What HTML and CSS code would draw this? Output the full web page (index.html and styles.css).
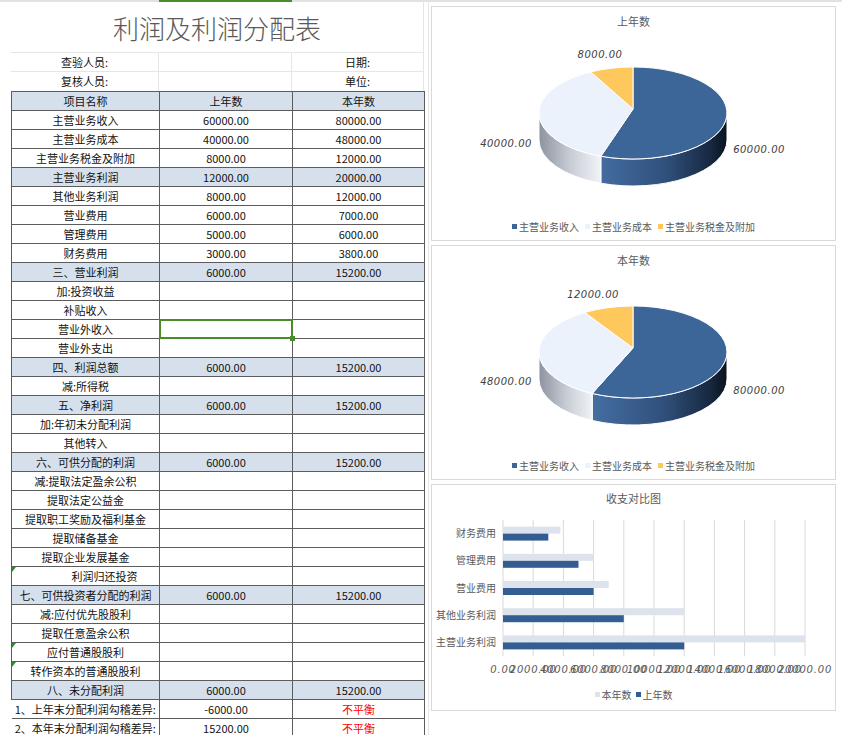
FILE: index.html
```html
<!DOCTYPE html>
<html lang="zh">
<head>
<meta charset="utf-8">
<title>利润及利润分配表</title>
<link rel="stylesheet" href="styles.css">
</head>
<body>
<div class="topbar"><span class="topbar-sel"></span></div>
<div class="page">
  <div class="sheet">
    <div class="title">利润及利润分配表</div>
    <div class="info">
      <div>查验人员:</div><div></div><div>日期:</div>
      <div>复核人员:</div><div></div><div>单位:</div>
    </div>
    <table class="grid">
      <colgroup><col class="c1"><col class="c2"><col class="c3"></colgroup>
      <tbody>
        <tr class="hl"><td>项目名称</td><td>上年数</td><td>本年数</td></tr>
        <tr><td>主营业务收入</td><td>60000.00</td><td>80000.00</td></tr>
        <tr><td>主营业务成本</td><td>40000.00</td><td>48000.00</td></tr>
        <tr><td>主营业务税金及附加</td><td>8000.00</td><td>12000.00</td></tr>
        <tr class="hl"><td>主营业务利润</td><td>12000.00</td><td>20000.00</td></tr>
        <tr><td>其他业务利润</td><td>8000.00</td><td>12000.00</td></tr>
        <tr><td>营业费用</td><td>6000.00</td><td>7000.00</td></tr>
        <tr><td>管理费用</td><td>5000.00</td><td>6000.00</td></tr>
        <tr><td>财务费用</td><td>3000.00</td><td>3800.00</td></tr>
        <tr class="hl"><td>三、营业利润</td><td>6000.00</td><td>15200.00</td></tr>
        <tr><td>加:投资收益</td><td></td><td></td></tr>
        <tr><td>补贴收入</td><td></td><td></td></tr>
        <tr><td>营业外收入</td><td class="sel"></td><td></td></tr>
        <tr><td>营业外支出</td><td></td><td></td></tr>
        <tr class="hl"><td>四、利润总额</td><td>6000.00</td><td>15200.00</td></tr>
        <tr><td>减:所得税</td><td></td><td></td></tr>
        <tr class="hl"><td>五、净利润</td><td>6000.00</td><td>15200.00</td></tr>
        <tr><td>加:年初未分配利润</td><td></td><td></td></tr>
        <tr><td>其他转入</td><td></td><td></td></tr>
        <tr class="hl"><td>六、可供分配的利润</td><td>6000.00</td><td>15200.00</td></tr>
        <tr><td>减:提取法定盈余公积</td><td></td><td></td></tr>
        <tr><td>提取法定公益金</td><td></td><td></td></tr>
        <tr><td>提取职工奖励及福利基金</td><td></td><td></td></tr>
        <tr><td>提取储备基金</td><td></td><td></td></tr>
        <tr><td>提取企业发展基金</td><td></td><td></td></tr>
        <tr><td class="tri indent">利润归还投资</td><td></td><td></td></tr>
        <tr class="hl"><td>七、可供投资者分配的利润</td><td>6000.00</td><td>15200.00</td></tr>
        <tr><td>减:应付优先股股利</td><td></td><td></td></tr>
        <tr><td>提取任意盈余公积</td><td></td><td></td></tr>
        <tr><td class="tri">应付普通股股利</td><td></td><td></td></tr>
        <tr><td class="tri">转作资本的普通股股利</td><td></td><td></td></tr>
        <tr class="hl"><td>八、未分配利润</td><td>6000.00</td><td>15200.00</td></tr>
        <tr class="chk"><td>1、上年末分配利润勾稽差异:</td><td>-6000.00</td><td class="bad">不平衡</td></tr>
        <tr class="chk"><td>2、本年末分配利润勾稽差异:</td><td>15200.00</td><td class="bad">不平衡</td></tr>
      </tbody>
    </table>
  </div>

  <div class="charts">
    <div class="chart pie-chart">
      <div class="chart-title">上年数</div>
      <svg class="pie" width="403" height="180" viewBox="0 0 403 180">
        <defs>
          <linearGradient id="ds1" gradientUnits="userSpaceOnUse" x1="160" y1="0" x2="295" y2="0">
            <stop offset="0" stop-color="#4670a5"/>
            <stop offset="0.55" stop-color="#30507b"/>
            <stop offset="0.88" stop-color="#172840"/>
            <stop offset="1" stop-color="#0a121e"/>
          </linearGradient>
          <linearGradient id="ls1" gradientUnits="userSpaceOnUse" x1="107" y1="0" x2="170" y2="0">
            <stop offset="0" stop-color="#8c939e"/>
            <stop offset="0.5" stop-color="#c8cdd5"/>
            <stop offset="1" stop-color="#f2f5f9"/>
          </linearGradient>
        </defs>
        <path d="M295,79 A94,46 0 0 1 168.85,122.23 L168.85,149.23 A94,46 0 0 0 295,106 Z" fill="url(#ds1)" stroke="#fff" stroke-width="1"/>
        <path d="M168.85,122.23 A94,46 0 0 1 107,79 L107,106 A94,46 0 0 0 168.85,149.23 Z" fill="url(#ls1)" stroke="#fff" stroke-width="1"/>
        <path d="M201,75 L201,33 A94,46 0 1 1 168.85,122.23 Z" fill="#3c6598" stroke="#fff" stroke-width="1"/>
        <path d="M201,75 L168.85,122.23 A94,46 0 0 1 158.81,37.89 Z" fill="#ebf2fb" stroke="#fff" stroke-width="1"/>
        <path d="M201,75 L158.81,37.89 A94,46 0 0 1 201,33 Z" fill="#ffc85c" stroke="#fff" stroke-width="1"/>
        <text class="dl" x="168" y="24" text-anchor="middle">8000.00</text>
        <text class="dl" x="74" y="113" text-anchor="middle">40000.00</text>
        <text class="dl" x="327" y="119" text-anchor="middle">60000.00</text>
      </svg>
      <div class="legend">
        <span class="item"><i class="sw dark"></i>主营业务收入</span>
        <span class="item"><i class="sw light"></i>主营业务成本</span>
        <span class="item"><i class="sw yellow"></i>主营业务税金及附加</span>
      </div>
    </div>

    <div class="chart pie-chart">
      <div class="chart-title">本年数</div>
      <svg class="pie" width="403" height="180" viewBox="0 0 403 180">
        <defs>
          <linearGradient id="ds2" gradientUnits="userSpaceOnUse" x1="155" y1="0" x2="295" y2="0">
            <stop offset="0" stop-color="#4670a5"/>
            <stop offset="0.55" stop-color="#30507b"/>
            <stop offset="0.88" stop-color="#172840"/>
            <stop offset="1" stop-color="#0a121e"/>
          </linearGradient>
          <linearGradient id="ls2" gradientUnits="userSpaceOnUse" x1="107" y1="0" x2="162" y2="0">
            <stop offset="0" stop-color="#8c939e"/>
            <stop offset="0.5" stop-color="#c8cdd5"/>
            <stop offset="1" stop-color="#f2f5f9"/>
          </linearGradient>
        </defs>
        <path d="M295,79 A94,46 0 0 1 160.21,120.45 L160.21,147.45 A94,46 0 0 0 295,106 Z" fill="url(#ds2)" stroke="#fff" stroke-width="1"/>
        <path d="M160.21,120.45 A94,46 0 0 1 107,79 L107,106 A94,46 0 0 0 160.21,147.45 Z" fill="url(#ls2)" stroke="#fff" stroke-width="1"/>
        <path d="M201,75 L201,33 A94,46 0 1 1 160.21,120.45 Z" fill="#3c6598" stroke="#fff" stroke-width="1"/>
        <path d="M201,75 L160.21,120.45 A94,46 0 0 1 152.79,39.51 Z" fill="#ebf2fb" stroke="#fff" stroke-width="1"/>
        <path d="M201,75 L152.79,39.51 A94,46 0 0 1 201,33 Z" fill="#ffc85c" stroke="#fff" stroke-width="1"/>
        <text class="dl" x="161" y="25" text-anchor="middle">12000.00</text>
        <text class="dl" x="74" y="112" text-anchor="middle">48000.00</text>
        <text class="dl" x="327" y="121" text-anchor="middle">80000.00</text>
      </svg>
      <div class="legend">
        <span class="item"><i class="sw dark"></i>主营业务收入</span>
        <span class="item"><i class="sw light"></i>主营业务成本</span>
        <span class="item"><i class="sw yellow"></i>主营业务税金及附加</span>
      </div>
    </div>

    <div class="chart bar-chart">
      <div class="chart-title">收支对比图</div>
      <svg class="bars" width="403" height="170" viewBox="0 0 403 170">
        <g class="gridlines">
          <line x1="71" y1="10" x2="71" y2="146"/>
          <line x1="101.2" y1="10" x2="101.2" y2="146"/>
          <line x1="131.4" y1="10" x2="131.4" y2="146"/>
          <line x1="161.6" y1="10" x2="161.6" y2="146"/>
          <line x1="191.8" y1="10" x2="191.8" y2="146"/>
          <line x1="222" y1="10" x2="222" y2="146"/>
          <line x1="252.2" y1="10" x2="252.2" y2="146"/>
          <line x1="282.4" y1="10" x2="282.4" y2="146"/>
          <line x1="312.6" y1="10" x2="312.6" y2="146"/>
          <line x1="342.8" y1="10" x2="342.8" y2="146"/>
          <line x1="373" y1="10" x2="373" y2="146"/>
        </g>
        <g class="cat">
          <text x="64" y="27">财务费用</text>
          <text x="64" y="54">管理费用</text>
          <text x="64" y="82">营业费用</text>
          <text x="64" y="109">其他业务利润</text>
          <text x="64" y="136">主营业务利润</text>
        </g>
        <g class="bar-light">
          <rect x="71" y="16.6" width="57.4" height="7"/>
          <rect x="71" y="43.8" width="90.6" height="7"/>
          <rect x="71" y="71" width="105.7" height="7"/>
          <rect x="71" y="98.2" width="181.2" height="7"/>
          <rect x="71" y="125.4" width="302" height="7"/>
        </g>
        <g class="bar-dark">
          <rect x="71" y="23.6" width="45.3" height="7"/>
          <rect x="71" y="50.8" width="75.5" height="7"/>
          <rect x="71" y="78" width="90.6" height="7"/>
          <rect x="71" y="105.2" width="120.8" height="7"/>
          <rect x="71" y="132.4" width="181.2" height="7"/>
        </g>
        <g class="ticks">
          <text x="71" y="163">0.00</text>
          <text x="101.2" y="163">2000.00</text>
          <text x="131.4" y="163">4000.00</text>
          <text x="161.6" y="163">6000.00</text>
          <text x="191.8" y="163">8000.00</text>
          <text x="222" y="163">10000.00</text>
          <text x="252.2" y="163">12000.00</text>
          <text x="282.4" y="163">14000.00</text>
          <text x="312.6" y="163">16000.00</text>
          <text x="342.8" y="163">18000.00</text>
          <text x="373" y="163">20000.00</text>
        </g>
      </svg>
      <div class="legend tight">
        <span class="item"><i class="sw barlight"></i>本年数</span>
        <span class="item"><i class="sw bardark"></i>上年数</span>
      </div>
    </div>
  </div>
</div>
</body>
</html>
```
FILE: styles.css
```css
* { box-sizing: border-box; }

html, body {
  margin: 0;
  padding: 0;
}

body {
  width: 842px;
  height: 735px;
  overflow: hidden;
  background: #fff;
  color: #111;
  font-family: "Noto Sans CJK SC", "Microsoft YaHei", "DejaVu Sans", sans-serif;
  font-size: 11px;
}

.topbar {
  height: 2px;
  background: #e2e2e2;
  display: flex;
}
.topbar-sel {
  margin-left: 159px;
  width: 133px;
  height: 2px;
  background: #4a8c2b;
}

.page {
  display: flex;
}

.sheet {
  width: 428px;
  flex: none;
}

.title {
  margin-left: 11px;
  width: 413px;
  height: 51px;
  display: flex;
  align-items: center;
  justify-content: center;
  font-size: 26px;
  font-weight: 300;
  color: #5a5a5a;
  border-right: 1px solid #e6e6e6;
  border-bottom: 1px solid #e6e6e6;
}

.info {
  margin-left: 11px;
  width: 413px;
  display: grid;
  grid-template-columns: 148px 133px 132px;
  grid-auto-rows: 19px;
}
.info > div {
  display: flex;
  align-items: center;
  justify-content: center;
  border-right: 1px solid #e6e6e6;
  border-bottom: 1px solid #e6e6e6;
  line-height: 1;
}
.info > div:nth-last-child(-n+3) {
  border-bottom: none;
}

table.grid {
  margin-left: 11px;
  width: 413px;
  border-collapse: collapse;
  table-layout: fixed;
}
col.c1 { width: 148px; }
col.c2 { width: 133px; }
col.c3 { width: 132px; }

table.grid tr { height: 19px; }
table.grid td {
  border: 1px solid #5c5c5c;
  padding: 0 2px;
  height: 19px;
  text-align: center;
  vertical-align: middle;
  line-height: 16px;
  white-space: nowrap;
}
table.grid tr.hl td {
  background: #d6e0ed;
}
table.grid tr.chk td:first-child {
  border-left: none;
}
table.grid td.bad {
  color: #ff0000;
}
table.grid td.indent {
  padding-left: 40px;
}

table.grid td.tri {
  position: relative;
}
table.grid td.tri::before {
  content: "";
  position: absolute;
  left: 0;
  top: 0;
  width: 0;
  height: 0;
  border-top: 5px solid #2f8a2f;
  border-right: 4px solid transparent;
}

table.grid td.sel {
  position: relative;
}
table.grid td.sel::after {
  content: "";
  position: absolute;
  left: -1px;
  top: -1px;
  right: -1px;
  bottom: -1px;
  border: 2px solid #4a8c2b;
}
table.grid td.sel::before {
  content: "";
  position: absolute;
  right: -3px;
  bottom: -3px;
  width: 5px;
  height: 5px;
  background: #4a8c2b;
  z-index: 1;
}

.charts {
  width: 414px;
  flex: none;
  border-left: 1px solid #e6e6e6;
  padding: 4px 0 0 2px;
  display: flex;
  flex-direction: column;
  gap: 4px;
}

.chart {
  width: 405px;
  border: 1px solid #d9d9d9;
  background: #fff;
  display: flex;
  flex-direction: column;
}
.pie-chart { height: 235px; }
.bar-chart { height: 227px; }

.chart-title {
  height: 27px;
  flex: none;
  display: flex;
  align-items: center;
  justify-content: center;
  font-size: 11px;
  color: #595959;
}
.bar-chart .chart-title { height: 25px; }

.chart svg {
  display: block;
  flex: none;
}

.dl {
  font-family: "DejaVu Sans", sans-serif;
  font-style: italic;
  font-size: 10px;
  letter-spacing: 0.5px;
  fill: #404040;
}

.legend {
  height: 25px;
  flex: none;
  display: flex;
  align-items: center;
  justify-content: center;
  gap: 6px;
  font-size: 10px;
  color: #595959;
}
.legend.tight {
  height: 28px;
  gap: 4px;
}
.legend .item {
  display: flex;
  align-items: center;
  gap: 2px;
}
.sw {
  display: inline-block;
  width: 5px;
  height: 5px;
}
.sw.dark { background: #3c6598; }
.sw.light { background: #ebf2fb; }
.sw.yellow { background: #ffc85c; }
.sw.barlight { background: #dde3ec; }
.sw.bardark { background: #345e92; }

.gridlines line {
  stroke: #d9d9d9;
  stroke-width: 1;
}
.cat text {
  font-size: 10px;
  fill: #595959;
  text-anchor: end;
}
.bar-light rect { fill: #dde3ec; }
.bar-dark rect { fill: #345e92; }
.ticks text {
  font-family: "DejaVu Sans", sans-serif;
  font-style: italic;
  font-size: 10px;
  letter-spacing: 0.8px;
  fill: #595959;
  text-anchor: middle;
}
```
